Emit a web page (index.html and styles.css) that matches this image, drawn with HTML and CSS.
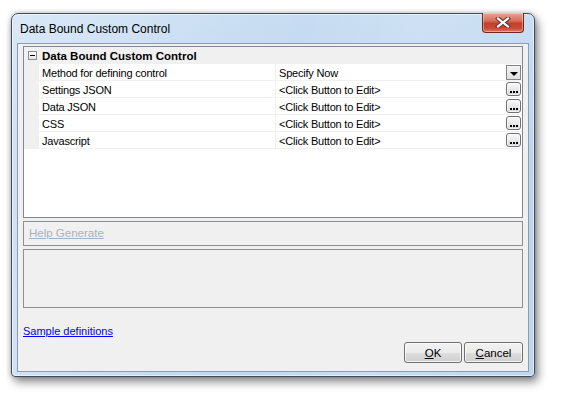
FILE: index.html
```html
<!DOCTYPE html>
<html>
<head>
<meta charset="utf-8">
<link rel="stylesheet" href="styles.css">
</head>
<body>
<div class="window">
  <div class="titlebar">
    <span class="title">Data Bound Custom Control</span>
    <div class="close">
      <svg width="16" height="11" viewBox="0 0 16 11">
        <path d="M3 1.5 L13 9.5 M13 1.5 L3 9.5" stroke="#5a3a36" stroke-width="4.2" stroke-linecap="square"/>
        <path d="M3 1.5 L13 9.5 M13 1.5 L3 9.5" stroke="#ffffff" stroke-width="2.2" stroke-linecap="square"/>
      </svg>
    </div>
  </div>
  <div class="client">
    <div class="grid">
      <div class="cat">
        <div class="margin"><span class="minus"></span></div>
        <div class="cat-name">Data Bound Custom Control</div>
      </div>
      <div class="row">
        <div class="margin"></div>
        <div class="name">Method for defining control</div>
        <div class="value"><span>Specify Now</span><span class="dd"><span class="arrow"></span></span></div>
      </div>
      <div class="row">
        <div class="margin"></div>
        <div class="name">Settings JSON</div>
        <div class="value"><span>&lt;Click Button to Edit&gt;</span><span class="ell"><i></i><i></i><i></i></span></div>
      </div>
      <div class="row">
        <div class="margin"></div>
        <div class="name">Data JSON</div>
        <div class="value"><span>&lt;Click Button to Edit&gt;</span><span class="ell"><i></i><i></i><i></i></span></div>
      </div>
      <div class="row">
        <div class="margin"></div>
        <div class="name">CSS</div>
        <div class="value"><span>&lt;Click Button to Edit&gt;</span><span class="ell"><i></i><i></i><i></i></span></div>
      </div>
      <div class="row">
        <div class="margin"></div>
        <div class="name">Javascript</div>
        <div class="value"><span>&lt;Click Button to Edit&gt;</span><span class="ell"><i></i><i></i><i></i></span></div>
      </div>
    </div>
    <div class="help"><a class="help-link">Help Generate</a></div>
    <div class="desc"></div>
    <div class="footer"><a class="sample-link">Sample definitions</a></div>
    <div class="buttons">
      <button class="btn ok"><span class="mn">O</span>K</button>
      <button class="btn cancel"><span class="mn">C</span>ancel</button>
    </div>
  </div>
</div>
</body>
</html>
```
FILE: styles.css
```css
html, body {
  margin: 0;
  padding: 0;
  background: #ffffff;
  width: 569px;
  height: 401px;
  overflow: hidden;
}
body {
  padding: 13px 0 0 11px;
  box-sizing: border-box;
  font-family: "Liberation Sans", Arial, sans-serif;
}
.window {
  width: 524px;
  height: 364px;
  box-sizing: border-box;
  border: 1px solid #3d4c5e;
  border-radius: 7px 7px 4px 4px;
  background:
    linear-gradient(100deg, rgba(255,255,255,0.35) 0%, rgba(255,255,255,0.1) 35%, rgba(255,255,255,0) 50%, rgba(255,255,255,0.15) 70%, rgba(255,255,255,0) 100%),
    linear-gradient(to bottom, #c6dcf2 0%, #bad3ed 40%, #bfd7f0 100%);
  box-shadow: inset 0 0 0 1px rgba(255,255,255,0.55), 3px 5px 10px rgba(0,0,0,0.45), 0 0 5px rgba(0,0,0,0.25);
  display: flex;
  flex-direction: column;
  padding: 0 5px 4px 5px;
}
.titlebar {
  height: 29px;
  display: flex;
  justify-content: space-between;
  align-items: flex-start;
}
.title {
  font-size: 12px;
  color: #000;
  padding: 8px 0 0 3px;
}
.close {
  width: 42px;
  height: 20px;
  box-sizing: border-box;
  margin: -1px 5px 0 0;
  border: 1px solid #6a2b22;
  border-top: none;
  border-radius: 0 0 4px 4px;
  background: linear-gradient(to bottom, #e9a595 0%, #d8705e 40%, #c0402c 55%, #c84a34 80%, #e07a5e 100%);
  box-shadow: inset 0 0 0 1px rgba(255,255,255,0.35);
  display: flex;
  align-items: center;
  justify-content: center;
}
.client {
  flex: 1;
  border: 1px solid #8c9db2;
  background: #f0f0f0;
  padding: 2px 5px 8px 5px;
  display: flex;
  flex-direction: column;
}
.grid {
  height: 172px;
  box-sizing: border-box;
  border: 1px solid #828790;
  background: #ffffff;
  font-size: 11px;
  color: #000;
}
.cat {
  height: 17px;
  display: flex;
  background: #f0f0f0;
  align-items: center;
}
.cat .margin {
  width: 15px;
  height: 17px;
  display: flex;
  align-items: center;
  padding-left: 4px;
  box-sizing: border-box;
}
.minus {
  width: 9px;
  height: 9px;
  box-sizing: border-box;
  border: 1px solid #8d8d8d;
  background: linear-gradient(to bottom, #ffffff, #e4e4e4);
  position: relative;
}
.minus::after {
  content: "";
  position: absolute;
  left: 1px;
  top: 3px;
  width: 5px;
  height: 1px;
  background: #000;
}
.cat-name {
  padding-left: 3px;
  font-weight: bold;
  font-size: 11.5px;
}
.row {
  height: 17px;
  display: flex;
  box-sizing: border-box;
  border-bottom: 1px solid #f0f0f0;
}
.row .margin {
  width: 15px;
  background: #f0f0f0;
}
.name {
  width: 237px;
  box-sizing: border-box;
  border-right: 1px solid #f0f0f0;
  padding: 1px 0 0 3px;
  line-height: 16px;
  white-space: nowrap;
  letter-spacing: -0.2px;
}
.value {
  flex: 1;
  display: flex;
  justify-content: space-between;
  align-items: center;
  padding: 0 1px 0 3px;
  line-height: 16px;
  letter-spacing: -0.2px;
}
.value > span:first-child {
  padding-top: 1px;
}
.dd {
  width: 15px;
  height: 15px;
  box-sizing: border-box;
  border: 1px solid #838383;
  background: linear-gradient(to bottom, #f4f4f4, #dedede);
  display: flex;
  align-items: center;
  justify-content: center;
  margin-top: 1px;
}
.arrow {
  width: 0;
  height: 0;
  border-left: 4px solid transparent;
  border-right: 4px solid transparent;
  border-top: 4px solid #000;
  margin-top: 2px;
}
.ell {
  width: 15px;
  height: 14px;
  box-sizing: border-box;
  border: 1px solid #707070;
  border-radius: 3px;
  background: linear-gradient(to bottom, #fafafa, #d8d8d8);
  box-shadow: inset 0 0 0 1px rgba(255,255,255,0.6);
  display: flex;
  align-items: flex-end;
  justify-content: center;
  gap: 1px;
  padding-bottom: 2px;
}
.ell i {
  display: block;
  width: 2px;
  height: 2px;
  background: #000;
}
.help {
  margin-top: 3px;
  height: 25px;
  box-sizing: border-box;
  border: 1px solid #8f8f8f;
  padding: 5px 0 0 5px;
  font-size: 11px;
}
.help-link {
  color: #9fb3cb;
  text-decoration: underline;
  font-size: 11.5px;
}
.desc {
  margin-top: 3px;
  height: 59px;
  box-sizing: border-box;
  border: 1px solid #8f8f8f;
}
.footer {
  margin-top: 17px;
  height: 13px;
  font-size: 11px;
  line-height: 13px;
}
.sample-link {
  color: #0000ff;
  text-decoration: underline;
}
.buttons {
  margin-top: 4px;
  display: flex;
  justify-content: flex-end;
  gap: 2px;
}
.btn {
  height: 21px;
  box-sizing: border-box;
  border: 1px solid #707070;
  border-radius: 3px;
  background: linear-gradient(to bottom, #f2f2f2 0%, #ebebeb 50%, #dddddd 51%, #cfcfcf 100%);
  box-shadow: inset 0 0 0 1px rgba(255,255,255,0.7);
  font-family: "Liberation Sans", Arial, sans-serif;
  font-size: 11.5px;
  color: #000;
  padding: 0;
}
.ok { width: 58px; }
.cancel { width: 59px; }
.mn { text-decoration: underline; }
```
